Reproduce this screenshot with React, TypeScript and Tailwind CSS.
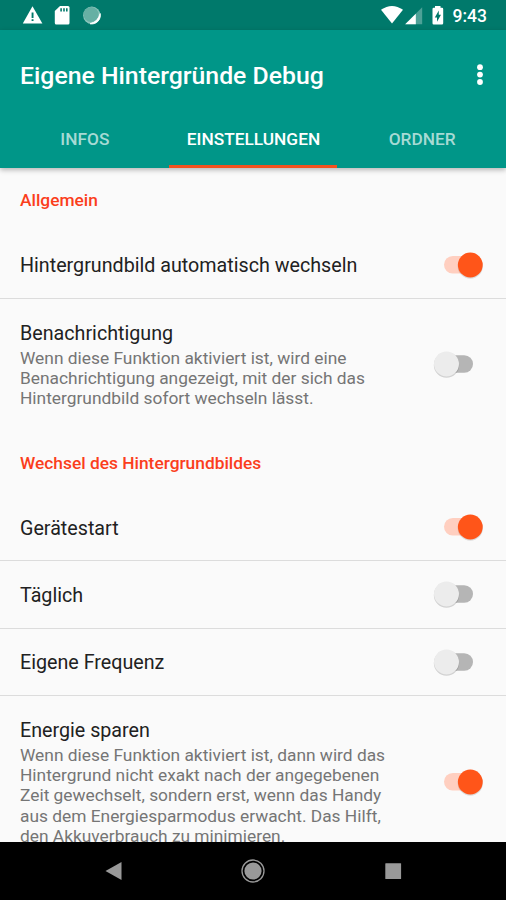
import React, { useState } from 'react';

const TABS = ['INFOS', 'EINSTELLUNGEN', 'ORDNER'];

const Switch = ({ on, onToggle }: { on: boolean; onToggle: () => void }) => (
  <button onClick={onToggle} role="switch" aria-checked={on} className="w-[60px] h-8 shrink-0">
    <svg width="60" height="32" viewBox="0 0 60 32" className="block">
      {on ? (
        <>
          <rect x="18" y="7" width="36" height="17.5" rx="8.75" fill="#FFCFC0" />
          <circle cx="44.3" cy="17.2" r="12.6" fill="#000" opacity="0.12" />
          <circle cx="44.3" cy="16" r="12.4" fill="#FF5519" />
        </>
      ) : (
        <>
          <rect x="12" y="7.3" width="35" height="17.5" rx="8.75" fill="#B5B5B5" />
          <circle cx="20.5" cy="17" r="12.7" fill="#000" opacity="0.16" />
          <circle cx="20.5" cy="16" r="12.5" fill="#ECECEC" />
        </>
      )}
    </svg>
  </button>
);

const StatusBar = () => (
  <div className="h-[30px] shrink-0 bg-[#00796B] flex items-center justify-between pl-[22px] pr-[19px]">
    <div className="flex items-center">
      <svg width="82" height="30" viewBox="0 0 82 30">
        <path d="M10.5 6.3 L20.4 23.5 H0.8 Z" fill="#fff" />
        <path d="M9.6 12.5 H11.5 V18 H9.6 Z M9.6 19.3 H11.5 V21.1 H9.6 Z" fill="#00796B" />
        <path d="M38 6 H46 Q47.5 6 47.5 7.5 V23 Q47.5 24.5 46 24.5 H34.3 Q32.8 24.5 32.8 23 V11 Z" fill="#fff" />
        <path d="M38.3 8.3 h1.6 v3.2 h-1.6 z M41.2 8.3 h1.6 v3.2 h-1.6 z M44 8.3 h1.6 v3.2 h-1.6 z" fill="#00796B" />
        <circle cx="69.8" cy="15.3" r="8.7" fill="#8CC5BB" />
        <path d="M78.2 13.5 A8.7 8.7 0 0 1 68 23.8 Q75.5 21.5 78.2 13.5 Z" fill="#fff" stroke="#fff" strokeWidth="0.8" />
        <circle cx="69" cy="14.5" r="7.6" fill="#66B0A4" />
      </svg>
    </div>
    <div className="flex items-center">
      <svg width="72" height="30" viewBox="0 0 72 30">
        <path d="M0 9.8 Q11 2 22 9.8 L11 23.6 Z" fill="#fff" />
        <path d="M41.2 7.3 V24.3 H24.2 Z" fill="#4DA197" />
        <path d="M34.8 13.7 V24.3 H24.2 Z" fill="#fff" />
        <path d="M54 6 H59.5 V7.8 H61 Q62.2 7.8 62.2 9 V23.3 Q62.2 24.5 61 24.5 H52.7 Q51.5 24.5 51.5 23.3 V9 Q51.5 7.8 52.7 7.8 H54 Z" fill="#fff" />
        <path d="M57.8 10.5 V14.8 H60 L56 21.8 V17.4 H53.8 Z" fill="#00796B" />
      </svg>
      <span className="text-white text-[17.5px] font-medium leading-[30px] pt-[2px]">9:43</span>
    </div>
  </div>
);

const SectionTitle = ({ children }: { children: React.ReactNode }) => (
  <h2 className="h-[63px] pl-5 text-[17.35px] font-medium leading-[64px] text-[#FA3E1C]">{children}</h2>
);

interface RowProps {
  title: string;
  lines?: string[];
  on: boolean;
  onToggle: () => void;
}

const SettingRow = ({ title, lines, on, onToggle }: RowProps) => (
  <div className={`flex items-center justify-between px-5 ${lines ? 'pt-[21px] pb-5 mb-[2.5px]' : 'h-[66.4px]'}`}>
    <div>
      <div className={`text-[19.7px] text-[#212121] whitespace-nowrap ${lines ? 'leading-[28px]' : 'leading-[26px] pt-[3px]'}`}>
        {title}
      </div>
      {lines && (
        <p className="text-[17.35px] leading-[20.2px] text-[#757575] whitespace-nowrap">
          {lines.map(line => (
            <span key={line} className="block">{line}</span>
          ))}
        </p>
      )}
    </div>
    <Switch on={on} onToggle={onToggle} />
  </div>
);

const Divider = () => <div className="h-px bg-[#DCDCDC]" />;

const NavBar = () => (
  <nav className="h-[58px] shrink-0 bg-black flex">
    <svg width="506" height="58" viewBox="0 0 506 58">
      <path d="M105.5 29 L121.5 20 V38 Z" fill="#999" />
      <circle cx="253" cy="29" r="11" fill="none" stroke="#999" strokeWidth="1.3" />
      <circle cx="253" cy="29" r="8.6" fill="#999" />
      <rect x="385.3" y="21.3" width="15.8" height="15.8" rx="0.5" fill="#999" />
    </svg>
  </nav>
);

export default function App() {
  const [activeTab, setActiveTab] = useState('EINSTELLUNGEN');
  const [settings, setSettings] = useState({
    auto: true,
    notify: false,
    boot: true,
    daily: false,
    custom: false,
    energy: true,
  });

  const toggle = (key: keyof typeof settings) => () =>
    setSettings(prev => ({ ...prev, [key]: !prev[key] }));

  return (
    <div className="w-[506px] h-[900px] flex flex-col overflow-hidden bg-[#FAFAFA] font-['Roboto',sans-serif]">
      <StatusBar />

      {/* Toolbar and tabs */}
      <header className="relative z-10 h-[138px] shrink-0 bg-[#009688] shadow-[0_2px_5px_rgba(0,0,0,0.28)] flex flex-col">
        <div className="h-[79px] pt-[12px] pl-5 pr-[20px] flex items-center justify-between">
          <h1 className="text-white text-[24.8px] font-medium leading-[30px] whitespace-nowrap">Eigene Hintergründe Debug</h1>
          <svg width="12" height="30" viewBox="0 0 12 30" fill="#fff">
            <circle cx="6" cy="6.2" r="2.9" />
            <circle cx="6" cy="13.6" r="2.9" />
            <circle cx="6" cy="21" r="2.9" />
          </svg>
        </div>
        <div className="flex-1 grid grid-cols-3">
          {TABS.map(tab => (
            <button
              key={tab}
              onClick={() => setActiveTab(tab)}
              className={`pt-[6px] pl-px text-[17.3px] font-medium border-b-[3px] ${
                activeTab === tab ? 'text-white border-[#F4511E]' : 'text-[#A6DAD4] border-transparent'
              }`}
            >
              {tab}
            </button>
          ))}
        </div>
      </header>

      <main className="flex-1 min-h-0 overflow-hidden pt-[0.4px]">
        <SectionTitle>Allgemein</SectionTitle>
        <SettingRow title="Hintergrundbild automatisch wechseln" on={settings.auto} onToggle={toggle('auto')} />
        <Divider />
        <SettingRow
          title="Benachrichtigung"
          lines={[
            'Wenn diese Funktion aktiviert ist, wird eine',
            'Benachrichtigung angezeigt, mit der sich das',
            'Hintergrundbild sofort wechseln lässt.',
          ]}
          on={settings.notify}
          onToggle={toggle('notify')}
        />
        <SectionTitle>Wechsel des Hintergrundbildes</SectionTitle>
        <SettingRow title="Gerätestart" on={settings.boot} onToggle={toggle('boot')} />
        <Divider />
        <SettingRow title="Täglich" on={settings.daily} onToggle={toggle('daily')} />
        <Divider />
        <SettingRow title="Eigene Frequenz" on={settings.custom} onToggle={toggle('custom')} />
        <Divider />
        <SettingRow
          title="Energie sparen"
          lines={[
            'Wenn diese Funktion aktiviert ist, dann wird das',
            'Hintergrund nicht exakt nach der angegebenen',
            'Zeit gewechselt, sondern erst, wenn das Handy',
            'aus dem Energiesparmodus erwacht. Das Hilft,',
            'den Akkuverbrauch zu minimieren.',
          ]}
          on={settings.energy}
          onToggle={toggle('energy')}
        />
      </main>

      <NavBar />
    </div>
  );
}
